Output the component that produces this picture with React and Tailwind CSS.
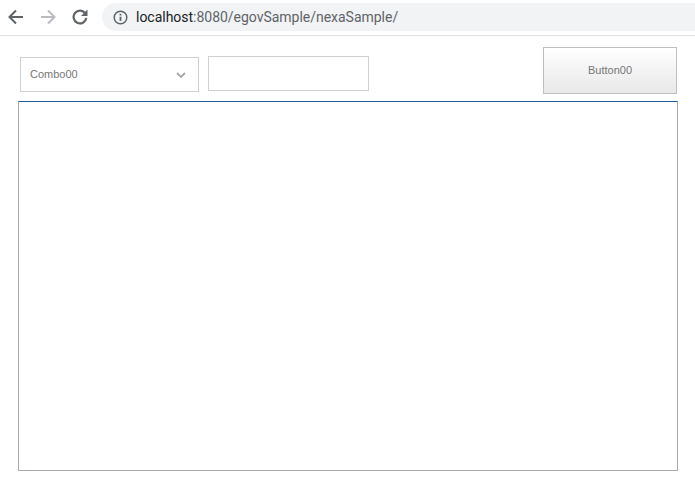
import React from 'react';

function BackIcon({ color }) {
  return (
    <svg width="16" height="16" viewBox="0 0 16 16" fill="none" stroke={color} strokeWidth="2">
      <path d="M15 8H2" />
      <path d="M8 1.5 1.5 8 8 14.5" />
    </svg>
  );
}

export default function App() {
  return (
    <div className="w-[695px] h-[491px] overflow-hidden bg-white font-['Liberation_Sans',sans-serif]">
      {/* barra do navegador */}
      <div className="h-[36px] border-b border-[#dedfe0] flex items-start">
        <div className="flex items-center h-[28px] mt-[3px] pl-[8px]">
          <BackIcon color="#5f6368" />
          <div className="ml-[16px] rotate-180">
            <BackIcon color="#b9bbbe" />
          </div>
          <svg className="ml-[16px]" width="16" height="16" viewBox="0 0 16 16" fill="none">
            <path d="M13.4 4.6A6.4 6.4 0 1 0 14.3 9" stroke="#5f6368" strokeWidth="2.2" />
            <path d="M15.5 0.5v6.5H9z" fill="#5f6368" />
          </svg>
        </div>
        <div className="ml-[14px] mt-[3px] h-[28px] flex-1 rounded-l-[14px] bg-[#f1f3f4] flex items-center pl-[11px]">
          <svg width="15" height="15" viewBox="0 0 15 15" fill="none">
            <circle cx="7.5" cy="7.5" r="6.3" stroke="#5f6368" strokeWidth="1.5" />
            <path d="M7.5 6.7v4.2" stroke="#5f6368" strokeWidth="1.8" />
            <path d="M7.5 3.8v1.7" stroke="#5f6368" strokeWidth="1.8" />
          </svg>
          <span className="ml-[8px] text-[14px] leading-none font-['Roboto',sans-serif] text-[#202124] tracking-[-0.02px]">
            localhost<span className="text-[#5f6368]">:8080/egovSample/nexaSample/</span>
          </span>
        </div>
      </div>

      {/* formulario */}
      <div className="h-[65px] pl-[20px] pr-[18px] flex items-start">
        <div className="mt-[21px] w-[179px] h-[35px] border border-[#d0d0d0] flex items-center justify-between pl-[9px] pr-[12px]">
          <span className="text-[11px] text-[#777777]">Combo00</span>
          <svg width="10" height="6" viewBox="0 0 10 6" fill="none">
            <path d="M1 1l4 4 4-4" stroke="#a8a8a8" strokeWidth="1.8" />
          </svg>
        </div>
        <input className="ml-[9px] mt-[20px] w-[161px] h-[35px] border border-[#d0d0d0] outline-none" />
        <button className="ml-auto mt-[11px] w-[134px] h-[47px] border border-[#c0c0c0] bg-gradient-to-b from-[#ffffff] to-[#e8e8e8] text-[11px] text-[#777777]">
          Button00
        </button>
      </div>

      {/* grid vazio */}
      <div className="ml-[18px] w-[660px] h-[370px] border border-[#aea8aa] border-t-[#1f5a9e]" />
    </div>
  );
}
